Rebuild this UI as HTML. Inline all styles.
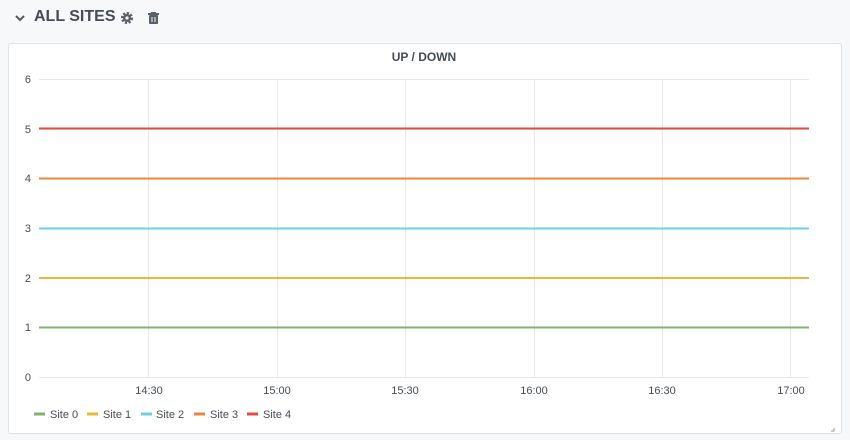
<!DOCTYPE html>
<html><head><style>
body{margin:0;width:850px;height:440px;background:#f7f8fa;font-family:"Liberation Sans",sans-serif;position:relative;overflow:hidden}
.hdr{position:absolute;left:14px;top:8px;font-size:16px;font-weight:bold;color:#464c54;}
.panel{position:absolute;left:8px;top:43px;width:832px;height:389px;background:#fff;border:1px solid #dde1e8;border-radius:3px}
</style></head><body>
<svg style="position:absolute;left:0;top:0" width="850" height="440">
<path d="M16 16 l4 4 l4 -4" stroke="#555a62" stroke-width="2" fill="none"/>
</svg>
<div class="hdr" style="left:34px">ALL SITES</div>
<svg style="position:absolute;left:121px;top:11px" width="40" height="16">
<circle cx="6" cy="7" r="4.8" fill="none" stroke="#5a6069" stroke-width="2.5" stroke-dasharray="2.2 1.5"/><circle cx="6" cy="7" r="4" fill="#5a6069"/><circle cx="6" cy="7" r="1.6" fill="#f7f8fa"/>
<rect x="27" y="2" width="11" height="2" fill="#5a6069"/><rect x="30" y="1" width="5" height="2" fill="#5a6069"/><rect x="28" y="4" width="9" height="9" rx="1" fill="#5a6069"/>
<rect x="30.5" y="6" width="1" height="5" fill="#f7f8fa"/><rect x="33.5" y="6" width="1" height="5" fill="#f7f8fa"/>
</svg>
<div class="panel"></div>
<svg style="position:absolute;left:0;top:0" width="850" height="440" font-family="Liberation Sans" font-size="11" fill="#464c54">
<text x="424" y="61" text-anchor="middle" font-weight="bold" font-size="12">UP / DOWN</text>
<g stroke="#e9e9e9" stroke-width="1">
<line x1="39" x2="809" y1="79.5" y2="79.5"/><line x1="39" x2="809" y1="129.5" y2="129.5"/><line x1="39" x2="809" y1="178.5" y2="178.5"/><line x1="39" x2="809" y1="228.5" y2="228.5"/><line x1="39" x2="809" y1="278.5" y2="278.5"/><line x1="39" x2="809" y1="327.5" y2="327.5"/><line x1="39" x2="809" y1="377.5" y2="377.5"/>
<line x1="148.5" x2="148.5" y1="79" y2="377"/><line x1="277.5" x2="277.5" y1="79" y2="377"/><line x1="405.5" x2="405.5" y1="79" y2="377"/><line x1="534.5" x2="534.5" y1="79" y2="377"/><line x1="662.5" x2="662.5" y1="79" y2="377"/><line x1="790.5" x2="790.5" y1="79" y2="377"/>
</g>
<g text-anchor="end"><text x="31" y="83">6</text><text x="31" y="133">5</text><text x="31" y="182">4</text><text x="31" y="232">3</text><text x="31" y="282">2</text><text x="31" y="331">1</text><text x="31" y="381">0</text></g>
<g text-anchor="middle"><text x="149" y="394">14:30</text><text x="277" y="394">15:00</text><text x="405" y="394">15:30</text><text x="534" y="394">16:00</text><text x="662" y="394">16:30</text><text x="791" y="394">17:00</text></g>
<g stroke-width="2">
<line x1="39" x2="809" y1="128.5" y2="128.5" stroke="#e24d42"/>
<line x1="39" x2="809" y1="178.5" y2="178.5" stroke="#ef843c"/>
<line x1="39" x2="809" y1="228.5" y2="228.5" stroke="#6ed0e0"/>
<line x1="39" x2="809" y1="278" y2="278" stroke="#eab839"/>
<line x1="39" x2="809" y1="327.5" y2="327.5" stroke="#7eb26d"/>
</g>
<g stroke-width="3">
<line x1="34" x2="45" y1="414" y2="414" stroke="#7eb26d"/>
<line x1="87" x2="98" y1="414" y2="414" stroke="#eab839"/>
<line x1="141" x2="152" y1="414" y2="414" stroke="#6ed0e0"/>
<line x1="194" x2="205" y1="414" y2="414" stroke="#ef843c"/>
<line x1="247" x2="258" y1="414" y2="414" stroke="#e24d42"/>
</g>
<text x="50" y="418">Site 0</text><text x="103" y="418">Site 1</text><text x="156" y="418">Site 2</text><text x="210" y="418">Site 3</text><text x="263" y="418">Site 4</text>
<path d="M834 428 L834 431 L831 431" stroke="#999" fill="none"/>
</svg>
</body></html>
